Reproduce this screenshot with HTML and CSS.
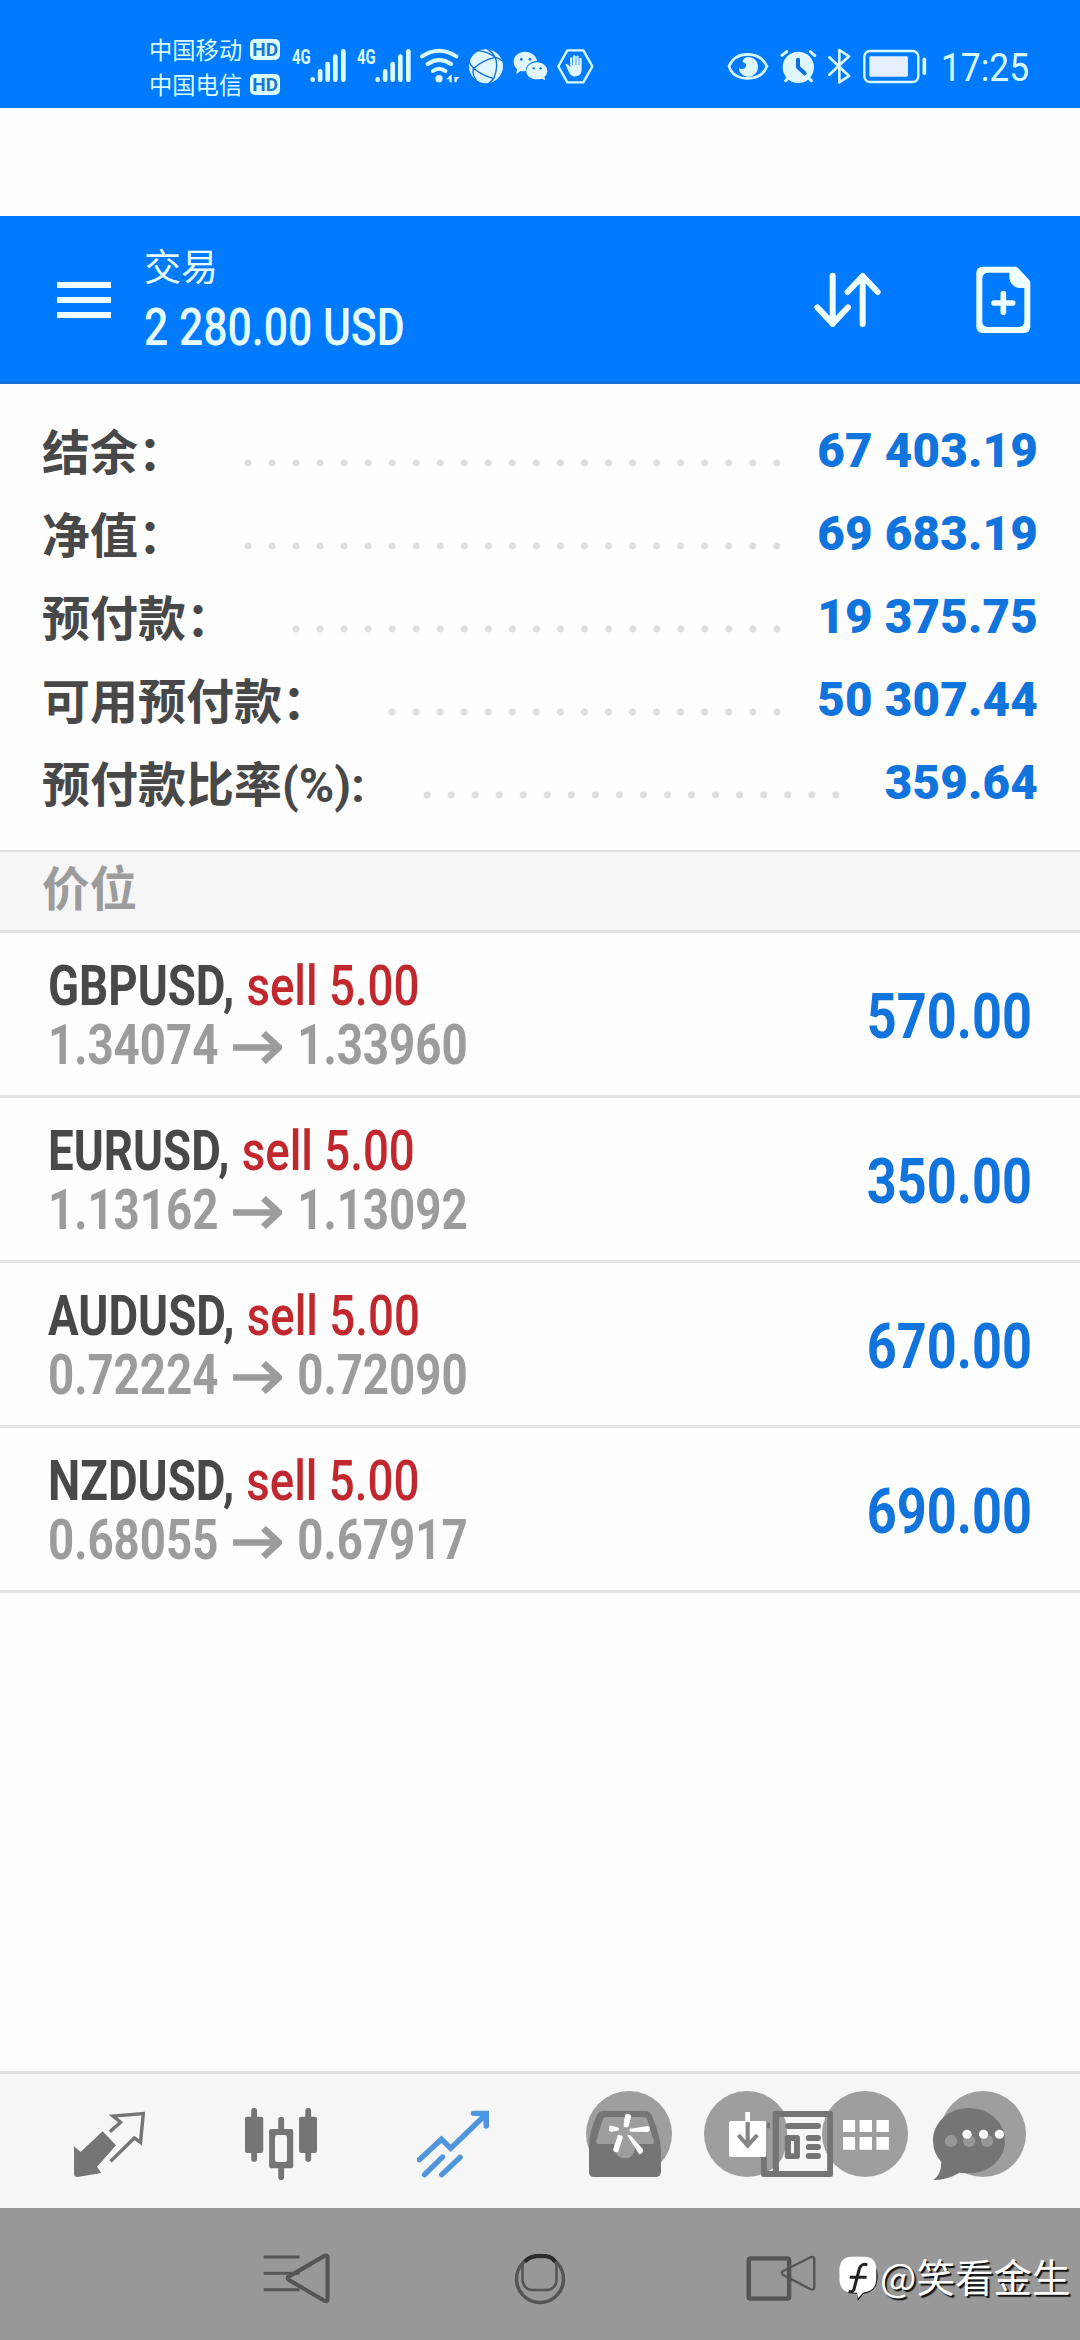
FILE: index.html
```html
<!DOCTYPE html>
<html lang="zh-CN">
<head>
<meta charset="utf-8">
<title>交易</title>
<link rel="stylesheet" href="styles.css">
</head>
<body>
<div class="screen">
  <header class="status">
    <div class="carriers">
      <div class="carrier">中国移动<span class="hd">HD</span></div>
      <div class="carrier">中国电信<span class="hd">HD</span></div>
    </div>
    <div class="status-left">
      <svg class="signal" width="55" height="36" viewBox="485 84 165 108"><text class="net" x="485" y="132" textLength="56" lengthAdjust="spacingAndGlyphs">4G</text><g class="bars"><path d="M547 178v1M569.500 154v25M592 132v47M615 110v69M639 94v85"/></g></svg>
      <svg class="signal two" width="55" height="36" viewBox="485 84 165 108"><text class="net" x="485" y="132" textLength="56" lengthAdjust="spacingAndGlyphs">4G</text><g class="bars"><path d="M547 178v1M569.500 154v25M592 132v47M615 110v69M639 94v85"/></g></svg>
      <svg class="wifi" width="42" height="36" viewBox="868 84 126 108"><g class="line" stroke-width="12"><path d="M877 109q51-34 103 0M894 132q35-24 70 0M910 153q18-13 37 0"/></g><circle class="ice" cx="928" cy="176" r="11"/><path class="ice" d="M966 162v25h-7v-9h-9zM974 162v9h16l-9 8v8h-7z"/></svg>
      <svg class="globe" width="36" height="36" viewBox="1013 84 108 108"><circle class="ice" cx="1067" cy="139" r="51"/><g class="cut" stroke-width="4"><path d="M1044 92q26 2 51 20M1070 86q16 10 25 26M1095 112q-38 8-66 34M1095 112q10 30-5 64M1016 126q18 34 74 50M1029 146q-4 18 8 34M1090 176l-14 14M1095 112q12 2 20 10"/></g></svg>
      <svg class="wechat" width="35" height="36" viewBox="1149 84 105 108"><path class="ice" d="M1185 95c19 0 34 12 36 28-20 1-34 14-34 30q-8 2-16 0l-12 10 2-16c-7-6-10-13-10-22 0-17 15-30 34-30z"/><path class="ice" d="M1221 127c17 0 31 11 31 26 0 8-4 14-9 18l3 10-11-5c-26 7-46-5-46-23 0-15 15-26 32-26z"/><g class="blue"><circle cx="1174" cy="118" r="4"/><circle cx="1200" cy="118" r="4"/><circle cx="1211" cy="145" r="3.500"/><circle cx="1232" cy="145" r="3.500"/></g></svg>
      <svg class="hand" width="37" height="36" viewBox="1281 84 111 108"><path class="line" stroke-width="7" d="M1312 91h48l27 48-27 48h-48l-27-48z"/><path class="ice" d="M1306 132q8-2 15 9l-1-27q5-5 7 0v22h2v-28q5-5 8 0v27h2v-27q4-4 7 1v27h2v-21q5-4 7 1v26q2 26-16 27-16 3-23-14z"/></svg>
    </div>
    <div class="status-right">
      <svg width="42" height="36" viewBox="79 84 126 108"><path class="line" stroke-width="8" d="M85 139q15-36 56-36t58 36q-14 36-58 36t-56-36z"/><path class="ice" d="M138 111c21-2 34 12 34 29s-13 30-29 30-29-13-28-26c8 6 20 2 21-7 1-7-4-9-11-11q4-12 13-15z"/></svg>
      <svg class="alarm" width="37" height="36" viewBox="238 84 111 108"><circle class="ice" cx="293" cy="142" r="47"/><g class="line" stroke-width="9"><path d="M244 106l14-11M329 95l13 12M262 174l-7 8M324 174l8 8"/></g><path class="cut" stroke-width="12" d="M292 119v23l20 18"/></svg>
      <svg class="bt" width="24" height="36" viewBox="378 84 72 108"><path class="line" stroke-width="8" d="M385 112l59 56-29 19V90l29 19-59 55"/></svg>
      <svg class="battery" width="64" height="36" viewBox="488 84 192 108"><rect class="line" stroke-width="7" x="492" y="93" width="162" height="93" rx="17"/><rect class="fill" x="507" y="109" width="116" height="61" rx="4"/><path class="line" stroke-width="11" d="M672 118v42"/></svg>
      <span class="clock">17:25</span>
    </div>
  </header>

  <header class="appbar">
    <svg class="menu" width="54" height="36" viewBox="0 0 54 36"><path d="M0 0h54v6H0zM0 15h54v6H0zM0 30h54v6H0z" fill="#eff"/></svg>
    <div class="titles">
      <h1>交易</h1>
      <p class="condensed">2 280.00 USD</p>
    </div>
    <svg class="sort" width="68" height="56" viewBox="337 186 204 168"><g fill="none" stroke="#eff" stroke-width="18" stroke-linecap="round" stroke-linejoin="round"><path d="M393 197v145M347 292l46 49 46-49M483 342V198M438 246l45-48 45 48"/></g></svg>
    <svg class="newdoc" width="55" height="68" viewBox="824 168 165 204"><path fill="#eff" fill-rule="evenodd" d="M843 170h99q5 1 9 5l32 34q4 4 4 9v133q-1 17-18 18H843q-17-1-18-18V188q1-17 18-18zm16 18q-15 2-16 16v132q1 14 16 15h94q14-1 16-15V234h-14q-27-3-31-30v-16z"/><path fill="none" stroke="#eff" stroke-width="17" stroke-linecap="round" d="M878 279h56M906 251v56"/></svg>
  </header>

  <section class="summary">
    <div class="entry"><span>结余：</span><i class="leader"></i><b>67 403.19</b></div>
    <div class="entry"><span>净值：</span><i class="leader"></i><b>69 683.19</b></div>
    <div class="entry"><span>预付款：</span><i class="leader"></i><b>19 375.75</b></div>
    <div class="entry"><span>可用预付款：</span><i class="leader"></i><b>50 307.44</b></div>
    <div class="entry ratio"><span>预付款比率<em>(%):</em></span><i class="leader wide"></i><b>359.64</b></div>
  </section>

  <h2 class="section">价位</h2>

  <main class="positions">
    <article class="position">
      <div class="condensed"><h3>GBPUSD, <span>sell 5.00</span></h3>
      <p>1.34074<svg class="arrow" viewBox="678 328 142 100" preserveAspectRatio="none"><path d="M678 378h134M766 335l45 43-45 43"/></svg>1.33960</p></div>
      <strong>570.00</strong>
    </article>
    <article class="position">
      <div class="condensed"><h3>EURUSD, <span>sell 5.00</span></h3>
      <p>1.13162<svg class="arrow" viewBox="678 328 142 100" preserveAspectRatio="none"><path d="M678 378h134M766 335l45 43-45 43"/></svg>1.13092</p></div>
      <strong>350.00</strong>
    </article>
    <article class="position">
      <div class="condensed"><h3>AUDUSD, <span>sell 5.00</span></h3>
      <p>0.72224<svg class="arrow" viewBox="678 328 142 100" preserveAspectRatio="none"><path d="M678 378h134M766 335l45 43-45 43"/></svg>0.72090</p></div>
      <strong>670.00</strong>
    </article>
    <article class="position">
      <div class="condensed"><h3>NZDUSD, <span>sell 5.00</span></h3>
      <p>0.68055<svg class="arrow" viewBox="678 328 142 100" preserveAspectRatio="none"><path d="M678 378h134M766 335l45 43-45 43"/></svg>0.67917</p></div>
      <strong>690.00</strong>
    </article>
  </main>

  <nav class="tabs">
    <svg class="float under" viewBox="0 2071 1080 137"><g fill="#9e9e9e"><circle cx="629" cy="2134" r="43"/><circle cx="747" cy="2134" r="43"/><circle cx="865" cy="2134" r="43"/><circle cx="983" cy="2134" r="43"/></g></svg>
    <svg class="tab" viewBox="212 144 209 216" preserveAspectRatio="none"><path d="M215 259l19 17 64-62 39 42-55 64 12 19-69 12q-10 0-10-9z"/><path fill="none" stroke="#757575" stroke-width="10" d="M319 215l31-28-22-19 88-7-8 86-18-13-69 70"/></svg>
    <svg class="tab" viewBox="714 144 209 216" preserveAspectRatio="none"><rect x="714" y="170" width="53" height="109" rx="6"/><rect x="871" y="170" width="52" height="109" rx="6"/><path fill-rule="evenodd" d="M790 207h58q6 0 6 6v106q0 6-6 6h-58q-6 0-6-6V213q0-6 6-6zm18 18q-7 0-7 7v67q0 7 7 7h22q6 0 6-7v-67q0-7-6-7z"/><path stroke="#757575" stroke-width="17" stroke-linecap="round" d="M740.500 152v145M897.500 152v145M819 179v30M819 323v29"/></svg>
    <svg class="tab on" viewBox="1214 144 209 216" preserveAspectRatio="none"><path d="M1221 299l64-61 27 27 97-97M1378 160h37v38M1236 344l52-53M1286 344l53-52" stroke-width="16" stroke-linecap="round" stroke-linejoin="miter" fill="none" stroke="#5096dc"/><path d="M1386 160h29v28z" fill="#4498ee"/></svg>
    <svg class="tab" viewBox="145 144 209 216" preserveAspectRatio="none"><path d="M186 153h128l11 18H196q-9 0-12 9l-18 62q-1 10 8 10h153q8 0 6-10l-18-61q-3-10-12-10l6-18q14 1 19 14 26 65 26 106v63q-1 15-16 15H160q-15 0-15-15v-78q2-50 22-90 6-15 19-15z"/><path fill="#9e9e9e" d="M218 252h62q-2 43-31 43t-31-43z"/></svg>
    <svg class="tab" viewBox="645 144 209 216" preserveAspectRatio="none"><path fill="#f6f6f6" d="M712 171h112q-14 60 0 120l13 20v22h-140v-20q24-40 24-90 0-30-9-52z"/><path fill-rule="evenodd" d="M685 153h162q7 0 7 7v184q0 7-7 7H652q-7 0-7-7V188h26v17h-9v128h17V160q0-7 6-7zm12 18v162h140V171z"/><path fill-rule="evenodd" d="M722 225h28q8 0 8 8v56q0 8-8 8h-28q-8 0-8-8v-56q0-8 8-8zm10 18v37h9v-37z"/><path fill="none" stroke="#757575" stroke-width="18" stroke-linecap="round" d="M724 198h86M784 234h26M784 261h26M784 288h26"/></svg>
    <svg class="tab" viewBox="1144 144 209 216" preserveAspectRatio="none"><path d="M1248 144c60 0 105 44 105 98s-45 98-105 98q-14 0-27-2-39 23-76 22 24-18 23-54-24-28-24-64c0-54 46-98 104-98z"/><g fill="#979797"><circle cx="1196" cy="243" r="18"/><circle cx="1249" cy="243" r="18"/><circle cx="1301" cy="243" r="18"/></g></svg>
    <svg class="float over" viewBox="0 2071 1080 137"><g transform="translate(540 2060) scale(.34438 .33333)" fill="#fff">
      <path d="M249 162q13-3 16 7l-8 31q-5 4-14 0 0-25 6-38zM201 201q0-5 6-4l22 6v8l-20 4q-8 2-9-6zM261 206l52-8q6 0 6 8 0 9-6 10l-50-1q-6-4-2-9zM226 226q9-3 15 5l-14 45q-10 4-15-7zM253 226q8-3 12 3l33 37q4 14-10 17z"/>
      <path d="M596 156h14v27h42q5 0 5 5v98q0 5-5 5h-98q-5 0-5-5v-98q0-5 5-5h42z"/><path d="M603 186v70M576 225l27 32 28-32" fill="none" stroke="#858585" stroke-width="12"/>
      <path d="M880 180h35v36h-35zM928 180h36v36h-36zM977 180h36v36h-36zM880 231h35v38h-35zM928 231h36v38h-36zM977 231h36v38h-36z"/>
      <circle cx="1240" cy="223" r="13.500"/><circle cx="1288" cy="223" r="13.500"/><circle cx="1334" cy="223" r="13.500"/>
    </g></svg>
  </nav>

  <footer class="softkeys">
    <svg class="back" width="68" height="54" viewBox="765 578 197 162" preserveAspectRatio="none"><path d="M767 593h104M767 642h104M767 691h104" stroke-width="9"/><path d="M839 652q-5 5 1 10l104 63q8 3 8-6V594q0-8-8-5z" stroke-width="12"/></svg>
    <svg class="home" width="52" height="52" viewBox="0 0 52 52"><circle cx="26" cy="26" r="23.500" stroke-width="3.500"/><rect x="8.500" y="4" width="34" height="33" rx="10" stroke-width="2.500"/><path d="M11 9q3-5 12-6h9q7 1 9 6" stroke="#2b2b2b" stroke-width="4"/></svg>
    <svg class="recent" width="70" height="48" viewBox="598 586 203 144" preserveAspectRatio="none"><rect x="606" y="596" width="117" height="121" rx="5" stroke-width="13"/><path d="M704 635q-5 5 1 10l79 43q11 5 12-4v-86q-1-9-11-5z" stroke-width="7"/></svg>
    <div class="credit">
      <svg width="40" height="46" viewBox="862 596 116 138" preserveAspectRatio="none"><path fill="#111" d="M923 605q53 0 54 54 0 48-42 54l-15 20-3-20q-50-2-50-54 0-54 56-54z"/><path fill="#fff" d="M900 601h40q33 2 33 38v32q-1 33-38 38l-15 17-3-17h-17q-32-3-34-38v-32q2-36 34-38z"/><path d="M947 626q-16-7-23 11l-16 63q-5 9-15 5M896 663h49" fill="none" stroke="#222" stroke-width="9"/></svg>
      <span>@笑看金生</span>
    </div>
  </footer>
</div>
</body>
</html>
```

FILE: styles.css
```css
* { box-sizing: border-box; margin: 0; padding: 0; }
body { background: #fefefe; font-family: Roboto, "Noto Sans CJK SC", sans-serif; }
svg { display: block; flex: none; }
.screen { width: 1080px; height: 2340px; display: flex; flex-direction: column; overflow: hidden; }
.condensed { transform: scaleX(.83); transform-origin: left center; white-space: nowrap; }

.status { height: 108px; background: #007bff; color: #d9fbff; display: flex; padding: 32px 0 0 149px; }
.carriers { width: 143px; }
.carrier { height: 35px; display: flex; align-items: center; gap: 8px; font: 23.3px/35px "Noto Sans CJK SC", sans-serif; white-space: nowrap; }
.hd { width: 30px; height: 21px; border-radius: 5px; background: #d9fbff; color: #1d76cf; font: bold 19px/21px Roboto, sans-serif; text-align: center; }
.status-left, .status-right { display: flex; height: 36px; margin-top: 16px; align-items: center; }
.signal { overflow: visible; }
.two { margin-left: 10px; }
.wifi { margin-left: 7px; }
.globe { margin-left: 7px; }
.wechat { margin-left: 9px; }
.hand { margin-left: 9px; }
.status-right { margin-left: 133px; }
.alarm { margin-left: 11px; }
.bt { margin-left: 10px; }
.battery { margin-left: 12px; }
.clock { margin-left: 14px; width: 90px; font-size: 38px; line-height: 38px; transform: translateY(2px) scaleX(.93); transform-origin: left; }
.net { font: bold 61px/1 Roboto, sans-serif; fill: #d9fbff; }
.bars, .line, .cut { fill: none; stroke: #d9fbff; stroke-linecap: round; stroke-linejoin: round; }
.bars { stroke-width: 14px; }
.cut { stroke: #0b70dd; }
.ice { fill: #dff6ff; }
.fill { fill: #e6efff; }
.blue { fill: #1272dc; }

.appbar { margin-top: 108px; height: 168px; background: #007bff; border-bottom: 3px solid #126fd8; color: #e6fdff; display: flex; padding-left: 57px; }
.menu { margin-top: 66px; }
.titles { width: 666px; padding: 22px 0 0 33px; }
.titles h1 { font: 37px/54px "Noto Sans CJK SC", sans-serif; }
.titles p { margin-top: 6px; font-size: 51.5px; font-weight: 500; line-height: 60px; }
.sort { margin: 56px 0 0 37px; }
.newdoc { margin: 50px 0 0 94px; }

.summary { height: 466px; padding: 26px 42px 0 42px; }
.entry { height: 83px; display: flex; align-items: center; color: #484848; font: bold 48px/83px "Noto Sans CJK SC", sans-serif; white-space: nowrap; }
.entry span { padding-bottom: 5px; }
.entry.ratio span { padding-bottom: 0; }
.entry em { font-family: Roboto, sans-serif; font-style: normal; }
.entry b { color: #1173dc; font-family: Roboto, sans-serif; font-size: 47.5px; letter-spacing: .2px; }
.leader { flex: 1; height: 8px; margin: 22px 28px 0 50px; background: radial-gradient(circle, #dedede 3px, transparent 4px) left / 24px 8px round; }
.leader.wide { margin-right: 37px; }

.section { height: 83px; background: #f6f6f6; border: solid #e0e0e0; border-width: 2px 0 3px; padding-left: 42px; color: #9c9c9c; font: bold 47.500px/67px "Noto Sans CJK SC", sans-serif; }

.position { height: 165px; border-bottom: 3px solid #e3e3e3; padding: 24px 48px 0 48px; display: flex; justify-content: space-between; font-size: 55px; line-height: 59px; }
.position h3 { font-size: 55px; color: #484848; }
.position h3 span { margin-left: 1px; font-weight: 500; color: #c0282e; }
.position p { display: flex; align-items: center; font-weight: 700; color: #9c9c9c; }
.arrow { width: 59px; height: 33px; margin: 3px 18px 0; fill: none; stroke: #9c9c9c; stroke-width: 20px; }
.position strong { font-size: 63px; line-height: 120px; color: #1173dc; transform: scaleX(.83); transform-origin: right; }

.tabs { position: relative; margin-top: auto; height: 137px; background: #f6f6f6; border-top: 3px solid #dfdfdf; padding: 34px 25px 0 23px; display: grid; grid-template-columns: repeat(6, 172px); justify-items: center; }
.tab { width: 72px; height: 72px; fill: #757575; position: relative; }
.float { position: absolute; left: 0; top: -3px; width: 1080px; height: 137px; }

.softkeys { height: 132px; background: #989898; display: flex; padding-left: 263px; }
.softkeys svg { fill: none; stroke: #555; }
.back { margin-top: 44px; }
.home { margin: 45px 0 0 183px; }
.recent { margin: 47px 0 0 180px; }
.credit { display: flex; margin: 47px 0 0 22px; }
.credit svg { stroke: none; }
.credit span { margin-left: 2px; color: #fff; font: 38.5px/40px "Noto Sans CJK SC", sans-serif; white-space: nowrap; text-shadow: 2px 2px 1px #111; }
```
